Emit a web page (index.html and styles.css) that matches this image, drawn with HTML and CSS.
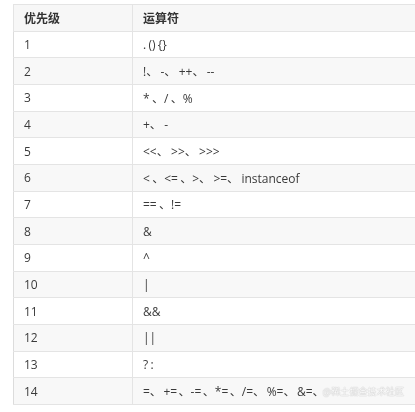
FILE: index.html
```html
<!DOCTYPE html>
<html lang="zh">
<head>
<meta charset="utf-8">
<link rel="stylesheet" href="styles.css">
</head>
<body>
<div class="page">
  <table class="ops">
    <thead>
      <tr><th class="c1">优先级</th><th class="c2">运算符</th></tr>
    </thead>
    <tbody>
      <tr><td>1</td><td>. () {}</td></tr>
      <tr><td>2</td><td>!、 -、 ++、 --</td></tr>
      <tr><td>3</td><td>* 、/ 、%</td></tr>
      <tr><td>4</td><td>+、 -</td></tr>
      <tr><td>5</td><td>&lt;&lt;、 &gt;&gt;、 &gt;&gt;&gt;</td></tr>
      <tr><td>6</td><td>&lt; 、&lt;= 、&gt;、 &gt;=、 instanceof</td></tr>
      <tr><td>7</td><td>== 、!=</td></tr>
      <tr><td>8</td><td>&amp;</td></tr>
      <tr><td>9</td><td>^</td></tr>
      <tr><td>10</td><td>|</td></tr>
      <tr><td>11</td><td>&amp;&amp;</td></tr>
      <tr><td>12</td><td>||</td></tr>
      <tr><td>13</td><td>? :</td></tr>
      <tr><td>14</td><td class="tight">=、 += 、-= 、*= 、/=、 %=、 &amp;=、</td></tr>
    </tbody>
  </table>
  <div class="mark">@稀土掘金技术社区</div>
</div>
</body>
</html>
```

FILE: styles.css
```css
html, body {
  margin: 0;
  padding: 0;
  background: #fff;
  width: 415px;
  height: 412px;
  overflow: hidden;
}
.page {
  position: relative;
  width: 415px;
  height: 412px;
  padding: 4px 0 0 13px;
  box-sizing: border-box;
  font-family: "Open Sans", "Noto Sans CJK SC", sans-serif;
  font-size: 12px;
  color: #3a3a3a;
  filter: grayscale(1);
  overflow: hidden;
}
.ops {
  border-collapse: collapse;
  width: 520px;
  table-layout: fixed;
}
.ops tr {
  height: 26.67px;
}
.ops th, .ops td {
  border: 1px solid #e4e4e4;
  padding: 0 9px 0 10px;
  text-align: left;
  white-space: nowrap;
  overflow: hidden;
  word-spacing: -0.8px;
}
.ops td.tight {
  word-spacing: -1.6px;
}
.ops th {
  font-weight: bold;
  background: #f7f7f7;
  color: #333;
}
.ops .c1 { width: 119px; box-sizing: border-box; }
.ops tbody tr:nth-child(even) td {
  background: #f8f8f8;
}
.ops td:first-child {
  border-left-color: #dcdcdc;
}
.mark {
  position: absolute;
  right: 11px;
  bottom: 14px;
  font-family: "Noto Sans CJK SC", sans-serif;
  font-size: 9px;
  color: #fcfcfc;
  text-shadow: 0 0 1px #bdbdbd, 0 0 1px #bdbdbd;
  letter-spacing: 0.1px;
}
```
